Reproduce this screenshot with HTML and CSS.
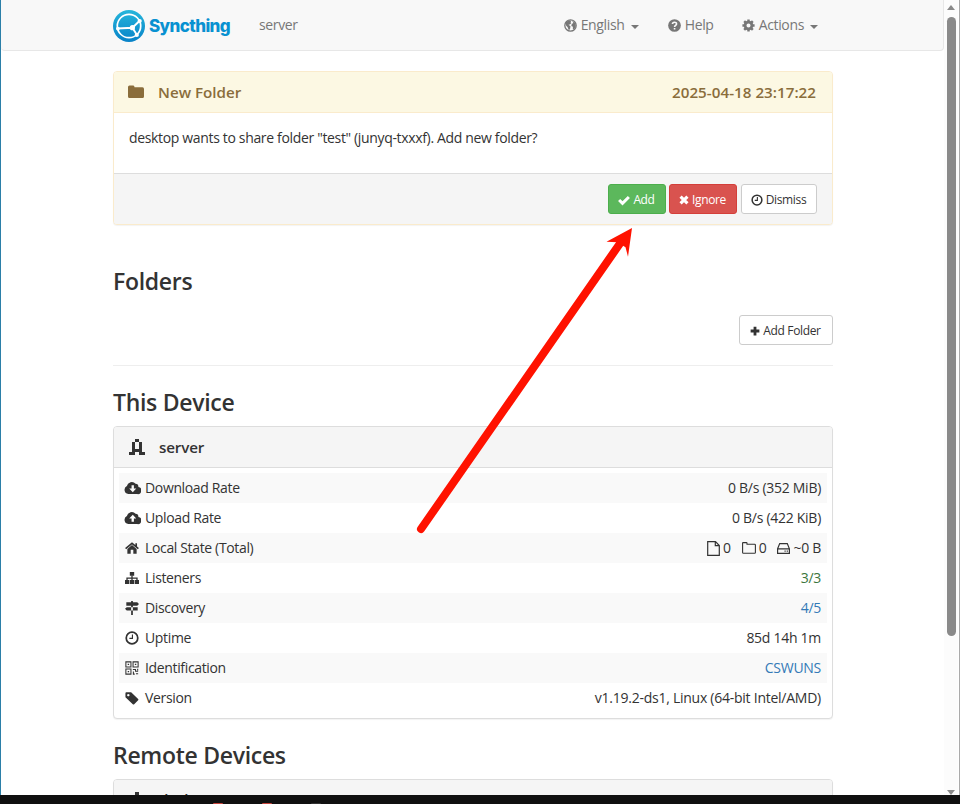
FILE: index.html
```html
<!DOCTYPE html>
<html lang="en">
<head>
<meta charset="utf-8">
<title>server | Syncthing</title>
<link rel="stylesheet" href="styles.css">
</head>
<body>
<div class="window">
  <div class="page">
    <nav class="navbar">
      <div class="brand">
        <svg class="logo" viewBox="0 0 32 32"><defs><linearGradient id="lg" x1="0" y1="0" x2="0" y2="1"><stop offset="0" stop-color="#26b6db"/><stop offset="1" stop-color="#0882c8"/></linearGradient></defs><circle cx="16" cy="16" r="16" fill="url(#lg)"/><g fill="none" stroke="#fff" stroke-width="1.7"><circle cx="16" cy="16" r="11.7"/><path d="M19.4 17.7L27 10.5M19.4 17.7L24 25M19.4 17.7L4.6 18.5" stroke-width="1.9"/></g><g fill="#fff"><circle cx="19.4" cy="17.7" r="2.6"/><circle cx="26.7" cy="11" r="2.1"/><circle cx="23.8" cy="25" r="2.1"/><circle cx="4.9" cy="18.6" r="1.9"/></g></svg>
        <span class="wordmark">Syncthing</span>
      </div>
      <span class="nav-device">server</span>
      <div class="menu">
        <span class="item lang"><svg class="ic" viewBox="0 0 16 16"><circle cx="8" cy="8" r="7" fill="none" stroke="currentColor" stroke-width="1.6"/><path fill="currentColor" d="M2 4l4-2.500 3 .5-1 2 1 1.300-2 1.500-1.500.2 2.500 2-.5 3-1.500 2-1.500-4-2-2zM10 2l4 3 .5 4-2 4-1.700-1 .2-2.500-2-1 .5-2.500 2-1z"/></svg><span>English</span><i class="caret"></i></span>
        <span class="item help"><svg class="ic" viewBox="0 0 16 16"><circle cx="8" cy="8" r="7.800" fill="currentColor"/><path d="M5.500 6.200C5.600 3.200 10.600 3.200 10.500 6c0 1.700-2.400 1.800-2.400 3.800M8.100 11v2" fill="none" stroke="#f8f8f8" stroke-width="2"/></svg><span>Help</span></span>
        <span class="item actions"><svg class="ic" viewBox="0 0 16 16"><path d="M8 .5v15M.5 8h15M2.700 2.700l10.600 10.600M13.300 2.700L2.700 13.300" stroke="currentColor" stroke-width="3"/><circle cx="8" cy="8" r="4.200" fill="#f8f8f8" stroke="currentColor" stroke-width="3.400"/></svg><span>Actions</span><i class="caret"></i></span>
      </div>
    </nav>
    <main class="container">
      <section class="panel notice">
        <header class="panel-head"><svg class="ic folder" viewBox="0 0 16 14"><path fill="currentColor" d="M0 2Q0 .5 1.500.5h3.800Q6.500.500 6.500 2.300h8Q16 2.300 16 4v7.500Q16 13 14.500 13h-13Q0 13 0 11.500z"/></svg><span class="t-new">New Folder</span><span class="t-date">2025-04-18 23:17:22</span></header>
        <p class="message">desktop wants to share folder "test" (junyq-txxxf). Add new folder?</p>
        <footer class="actions-bar">
          <button class="btn add"><svg class="ic" viewBox="0 0 16 16"><path d="M1.500 8l4.500 4.500L14.500 4" fill="none" stroke="currentColor" stroke-width="4"/></svg><span>Add</span></button>
          <button class="btn ignore"><svg class="ic small" viewBox="0 0 16 16"><path d="M2.500 2.500l11 11M13.500 2.500l-11 11" stroke="currentColor" stroke-width="5"/></svg><span>Ignore</span></button>
          <button class="btn dismiss"><svg class="ic" viewBox="0 0 16 16"><circle cx="8" cy="8" r="6.500" fill="none" stroke="currentColor" stroke-width="2"/><path d="M8.500 4v4.500H5" fill="none" stroke="currentColor" stroke-width="1.500"/></svg><span>Dismiss</span></button>
        </footer>
      </section>
      <h3 class="h-folders"><span>Folders</span></h3>
      <div class="tools"><button class="btn add-folder"><svg class="ic small" viewBox="0 0 16 16"><path d="M8 1v14M1 8h14" stroke="currentColor" stroke-width="4.500"/></svg><span>Add Folder</span></button></div>
      <hr>
      <h3 class="h-device"><span>This Device</span></h3>
      <section class="panel device">
        <header class="panel-head"><svg class="identicon" viewBox="0 0 5 5" shape-rendering="crispEdges"><path fill="currentColor" d="M2 0h1v1H2zM1 1h1v3H1zM3 1h1v3H3zM2 3h1v1H2zM0 4h2v1H0zM3 4h2v1H3z"/></svg><span class="t-server">server</span></header>
        <div class="rows">
          <div class="row"><svg class="ic wide" viewBox="0 0 18 16"><path fill="currentColor" d="M4.500 15A4.500 4.500 0 0 1 3 6.500 5.300 5.300 0 0 1 12.300 4a3.300 3.300 0 0 1 3 3.500A3.800 3.800 0 0 1 14 15z"/><path fill="#f9f9f9" d="M8 5.500h2.500V9H13l-3.700 4L5.500 9H8z"/></svg><span class="w-down">Download Rate</span><span class="val v-down">0 B/s (352 MiB)</span></div>
          <div class="row"><svg class="ic wide" viewBox="0 0 18 16"><path fill="currentColor" d="M4.500 15A4.500 4.500 0 0 1 3 6.500 5.300 5.300 0 0 1 12.300 4a3.300 3.300 0 0 1 3 3.500A3.800 3.800 0 0 1 14 15z"/><path fill="#fff" d="M8 12.500h2.500V9H13L9.300 5 5.500 9H8z"/></svg><span>Upload Rate</span><span class="val v-up">0 B/s (422 KiB)</span></div>
          <div class="row"><svg class="ic" viewBox="0 0 16 16"><path d="M.7 8.700L8 2.600l7.300 6.100M12.800 2.500v4" fill="none" stroke="currentColor" stroke-width="1.900"/><path fill="currentColor" d="M2.700 9L8 4.700 13.300 9v5.500H9.500V10h-3v4.500H2.700z"/></svg><span>Local State (Total)</span>
            <span class="val state"><svg class="file" viewBox="0 0 13 15"><path d="M.7.7h7.800l3.800 3.800v9.800H.7zM8.300.700v4h4" fill="none" stroke="currentColor" stroke-width="1.200"/></svg><span>0</span><svg class="dir" viewBox="0 0 14 12"><path d="M.6 1.100q0-.5.500-.5h3.300q.6 0 .6.6v1h7.600q.8 0 .8.700v7.500q0 .8-.8.800H1.400q-.8 0-.8-.8z" fill="none" stroke="currentColor" stroke-width="1.100"/></svg><span>0</span><svg class="disk" viewBox="0 0 13 11"><path d="M.6 5.800L2.700.6h7.600l2.100 5.200v4.600H.6zM.6 5.800h11.800M7.500 8.200h1.200M9.700 8.200h1.200" fill="none" stroke="currentColor" stroke-width="1.200"/></svg><span class="bytes">~0 B</span></span></div>
          <div class="row"><svg class="ic" viewBox="0 0 16 16"><path fill="currentColor" d="M5.500 1h5v4.500h-5zM0 10.300h5v4.500H0zM5.700 10.300h4.600v4.500H5.700zM11 10.300h5v4.500h-5z"/><path d="M8 5v6M2.300 11V8.200h11.400V11" fill="none" stroke="currentColor" stroke-width="1.500"/></svg><span>Listeners</span><span class="val green">3/3</span></div>
          <div class="row"><svg class="ic" viewBox="0 0 16 16"><path fill="currentColor" d="M7 0h2v16H7zM1.500 1.500H14l2 1.900-2 1.900H1.500zM14.500 7H2L0 8.900l2 1.900h12.500z"/></svg><span>Discovery</span><span class="val blue">4/5</span></div>
          <div class="row"><svg class="ic" viewBox="0 0 16 16"><circle cx="8" cy="8" r="6.600" fill="none" stroke="currentColor" stroke-width="2"/><path d="M8.500 4v4.500H5" fill="none" stroke="currentColor" stroke-width="1.300"/></svg><span>Uptime</span><span class="val v-uptime">85d 14h 1m</span></div>
          <div class="row"><svg class="ic" viewBox="0 0 16 16"><path d="M1 1h5.800v5.800H1zM9.200 1H15v5.800H9.200zM1 9.200h5.800V15H1zM9 9.600h3v2h3M15 14.500h-2.500M9.600 12v3h1.500M14.500 8.800v2" fill="none" stroke="currentColor" stroke-width="1.200"/><path fill="currentColor" d="M3.100 3.100h1.600v1.600H3.100zM11.300 3.100h1.600v1.600h-1.600zM3.100 11.300h1.600v1.600H3.100z"/></svg><span>Identification</span><span class="val blue v-id">CSWUNS</span></div>
          <div class="row"><svg class="ic" viewBox="0 0 16 16"><path fill="currentColor" fill-rule="evenodd" d="M.5 2.500Q.5 1.500 1.500 1.500H7L15 9q.8.800 0 1.600l-4.500 4.500q-.8.700-1.600 0L.5 7zM3.800 3.300a1.400 1.400 0 1 0 .01 0z"/></svg><span>Version</span><span class="val v-version">v1.19.2-ds1, Linux (64-bit Intel/AMD)</span></div>
        </div>
      </section>
      <h3 class="h-remote"><span>Remote Devices</span></h3>
      <section class="panel remote">
        <header class="panel-head"><svg class="identicon" viewBox="0 0 5 5" shape-rendering="crispEdges"><path fill="currentColor" d="M2 0h1v1H2zM1 1h1v3H1zM3 1h1v3H3z"/></svg><span class="remote-name">desktop</span></header>
      </section>
    </main>
  </div>
  <div class="scrollbar"><i class="up"></i><i class="thumb"></i><i class="down"></i></div>
</div>
<div class="taskbar"><i></i><i></i><i class="dim"></i></div>
<svg class="pointer" viewBox="0 0 230 320"><path d="M11 309L211 22" stroke="#ff1200" stroke-width="8" stroke-linecap="round"/><path d="M222 8L196.500 21.700l11 .5 8 5 2.500 9.500z" fill="#ff1200"/></svg>
</body>
</html>
```

FILE: styles.css
```css
* { box-sizing: border-box; }
body { margin: 0; width: 960px; height: 804px; overflow: hidden; display: flex; flex-direction: column; background: #fff; color: #333; font: 14px/20px "Open Sans", "Noto Sans", sans-serif; letter-spacing: -0.35px; }
.window { height: 795px; display: flex; overflow: hidden; border-left: 1px solid #2b7fa8; border-right: 1px solid #aaa; }
.page { width: 943px; overflow: hidden; }
.navbar { height: 51px; display: flex; align-items: center; padding: 1px 0 0 112px; background: #f8f8f8; border: 1px solid #e7e7e7; border-width: 0 1px 1px 0; border-radius: 0 0 4px 4px; color: #777; }
.brand { display: flex; align-items: center; width: 146px; gap: 4px; }
.logo { width: 32px; height: 32px; }
.wordmark { font: 800 17px/22px Inter, sans-serif; color: #0891d1; letter-spacing: -0.6px; }
.menu { display: flex; margin-left: auto; margin-right: 125px; }
.item { display: flex; align-items: center; gap: 4px; }
.nav-device, .item { padding-bottom: 1px; }
.lang { width: 104px; }
.help { width: 74px; }
.ic { width: 13px; height: 13px; flex: none; }
.caret { border: 4px solid transparent; border-top-color: currentColor; border-bottom: 0; margin-left: 2px; margin-top: 4px; }
.container { width: 720px; margin: 20px 0 0 112px; }
.panel { border: 1px solid #ddd; border-radius: 4px; box-shadow: 0 1px 1px rgba(0,0,0,.05); overflow: hidden; background: #fff; }
.panel-head { height: 41px; display: flex; align-items: center; padding: 0 15px; background: #f5f5f5; border-bottom: 1px solid #ddd; font-size: 15.200px; font-weight: 600; letter-spacing: -.15px; }
.notice { height: 154px; border-color: #faebcc; }
.notice .panel-head { background: #fcf8e3; border-color: #faebcc; color: #8a6d3b; padding: 0 16px 1px 14px; }
.folder { width: 16px; height: 14px; margin-right: 14px; }
.t-new { letter-spacing: 0; }
.t-date { margin-left: auto; letter-spacing: .02px; }
.message { margin: 0; height: 60px; padding: 15px; letter-spacing: -.34px; }
.actions-bar { height: 51px; display: flex; justify-content: flex-end; padding: 10px 15px; background: #f5f5f5; border-top: 1px solid #ddd; }
.btn { height: 30px; display: flex; align-items: center; justify-content: center; gap: 3px; padding: 2px 1px 0 0; border: 1px solid #ccc; border-radius: 3px; background: #fff; color: #333; font: 12px/18px "Open Sans", sans-serif; letter-spacing: -.35px; }
.btn .ic { width: 12px; height: 12px; }
.btn .small { width: 10px; height: 10px; }
.add { width: 58px; background: #5cb85c; border-color: #4cae4c; color: #fff; }
.ignore { width: 68px; margin: 0 4px 0 3px; background: #d9534f; border-color: #d43f3a; color: #fff; }
.dismiss { width: 76px; }
h3 { margin: 0; font-size: 23px; line-height: 26px; font-weight: 600; letter-spacing: -.3px; }
.h-folders { margin-top: 43px; }
.tools { display: flex; justify-content: flex-end; margin-top: 21px; }
.add-folder { width: 94px; }
hr { margin: 20px 0; border: 0; border-top: 1px solid #eee; }
.h-device { margin-top: 23px; }
.device { height: 293px; margin-top: 11px; }
.identicon { width: 16px; height: 16px; margin-right: 14px; }
.rows { padding: 5px; }
.row { height: 30px; display: flex; align-items: center; padding: 0 6px; }
.row:nth-child(odd) { background: #f9f9f9; }
.row .ic { width: 14px; height: 14px; margin-right: 6px; }
.row .wide { width: 17px; height: 15px; margin: 0 4px 2px -1px; }
.val { margin-left: auto; letter-spacing: -.28px; }
.v-version { letter-spacing: -.25px; }
.state { display: flex; align-items: center; gap: 3px; }
.file { width: 13px; height: 15px; }
.dir { width: 14px; height: 12px; margin-left: 8px; }
.disk { width: 13px; height: 11px; margin-left: 8px; }
.green { color: #3c763d; }
.blue { color: #337ab7; }
.h-remote { margin-top: 23px; }
.remote { height: 80px; margin-top: 11px; }
.remote-name { padding-bottom: 2px; }
.scrollbar { width: 14px; display: flex; flex-direction: column; align-items: center; background: #fcfcfc; }
.scrollbar .up { margin-top: 5px; border: 4.500px solid transparent; border-top: 0; border-bottom: 5px solid #8a8a8a; }
.thumb { width: 9px; height: 619px; margin-top: 7px; border-radius: 5px; background: #8a8a8a; }
.scrollbar .down { margin-top: auto; border: 4.500px solid transparent; border-bottom: 0; border-top: 5px solid #8a8a8a; }
.taskbar { height: 9px; background: #101010; display: flex; align-items: flex-end; gap: 39px; padding-left: 213px; overflow: hidden; }
.taskbar i { width: 10px; height: 1px; border-radius: 5px 5px 0 0; background: #c8443c; }
.taskbar .dim { background: #333; }
.pointer { position: absolute; left: 410px; top: 220px; width: 230px; height: 320px; }
```
